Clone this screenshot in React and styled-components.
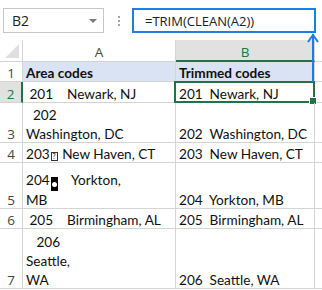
import React from "react";
import styled, { createGlobalStyle } from "styled-components";

const Global = createGlobalStyle`
  html, body { margin: 0; padding: 0; background: #fff; }
  body { width: 322px; height: 290px; overflow: hidden; }
  * { box-sizing: border-box; }
`;

const Page = styled.div`
  position: relative;
  width: 322px;
  height: 290px;
  background: #fff;
`;

const FormulaBar = styled.div`
  display: flex;
  align-items: center;
  height: 40px;
  padding: 8px 6px 7px 3px;
`;

const NameBox = styled.div`
  display: flex;
  align-items: center;
  justify-content: space-between;
  width: 101px;
  height: 25px;
  border: 1px solid #c6c6c6;
  padding: 0 6px 0 8px;
  font-family: "Open Sans", "Noto Sans", sans-serif;
  font-size: 14px;
  color: #222;
`;

const Caret = styled.span`
  width: 0;
  height: 0;
  border-left: 4px solid transparent;
  border-right: 4px solid transparent;
  border-top: 4px solid #7a7a7a;
`;

const Dots = styled.div`
  display: flex;
  flex-direction: column;
  gap: 2px;
  margin: 0 12px 0 14px;
  span {
    width: 2px;
    height: 2px;
    background: #a6a6a6;
  }
`;

const FormulaInput = styled.div`
  flex: 1;
  height: 25px;
  border: 2px solid #1a7fe0;
  display: flex;
  align-items: center;
  padding-left: 11px;
  font-family: "Open Sans", "Noto Sans", sans-serif;
  font-size: 13px;
  color: #222;
`;

const Grid = styled.div`
  display: grid;
  grid-template-columns: 23px 153px 139px 1fr;
  grid-template-rows: 22px 20px 21px 40px 20px 46px 20px 60px;
  font-family: Lato, "Liberation Sans", sans-serif;
  font-size: 13.6px;
  color: #111;
`;

const Corner = styled.div`
  position: relative;
  border-right: 1px solid #d4d4d4;
  border-bottom: 1px solid #d4d4d4;
  &::after {
    content: "";
    position: absolute;
    right: 3px;
    bottom: 3px;
    width: 0;
    height: 0;
    border-left: 14px solid transparent;
    border-bottom: 14px solid #dfdfdf;
  }
`;

const ColHead = styled.div`
  display: flex;
  align-items: center;
  justify-content: center;
  padding-top: 3px;
  font-family: "Open Sans", "Noto Sans", sans-serif;
  font-size: 13.5px;
  color: ${(p) => (p.$active ? "#217346" : "#444")};
  background: ${(p) => (p.$active ? "#e1e1e1" : "#fff")};
  border-right: 1px solid #d4d4d4;
  border-bottom: ${(p) => (p.$active ? "2px solid #217346" : "1px solid #d4d4d4")};
`;

const RowHead = styled.div`
  display: flex;
  align-items: flex-end;
  justify-content: center;
  line-height: 19px;
  font-family: "Open Sans", "Noto Sans", sans-serif;
  font-size: 13.5px;
  color: ${(p) => (p.$active ? "#217346" : "#444")};
  background: ${(p) => (p.$active ? "#e1e1e1" : "#fff")};
  border-right: ${(p) => (p.$active ? "2px solid #217346" : "1px solid #d4d4d4")};
  border-bottom: 1px solid #d4d4d4;
  span { margin-bottom: -2px; }
`;

const Cell = styled.div`
  position: relative;
  display: flex;
  align-items: flex-end;
  padding: 0 0 0 3px;
  line-height: 19px;
  white-space: pre;
  font-weight: ${(p) => (p.$bold ? 700 : 400)};
  background: ${(p) => (p.$head ? "#dae3f3" : "transparent")};
  border-right: 1px solid #d4d4d4;
  border-bottom: 1px solid #d4d4d4;
`;

const CellText = styled.span`
  margin-bottom: -2px;
`;

const Filler = styled.div`
  border-bottom: 1px solid #d4d4d4;
`;

const Selection = styled.div`
  position: absolute;
  left: -2px;
  top: -1px;
  right: -1px;
  bottom: -1px;
  border: 2px solid #217346;
  pointer-events: none;
  &::after {
    content: "";
    position: absolute;
    right: -4px;
    bottom: -4px;
    width: 6px;
    height: 6px;
    background: #217346;
    border: 1px solid #fff;
  }
`;

const MissingGlyph = styled.span`
  display: inline-block;
  width: 7px;
  height: 9px;
  margin: 0 1px;
  border: 1px solid #333;
  font-size: 7px;
  line-height: 7px;
  text-align: center;
`;

const InvertedGlyph = styled.span`
  display: inline-flex;
  align-items: center;
  justify-content: center;
  width: 7px;
  height: 14px;
  margin-left: 1px;
  background: #000;
  vertical-align: -2px;
  &::after {
    content: "";
    width: 5px;
    height: 5px;
    border-radius: 50%;
    background: #fff;
  }
`;

const Arrow = styled.svg`
  position: absolute;
  left: 306px;
  top: 33px;
`;

const rows = [
  { n: 1, a: "Area codes", b: "Trimmed codes", head: true },
  { n: 2, a: " 201    Newark, NJ", b: "201  Newark, NJ", active: true },
  { n: 3, a: "  202\nWashington, DC", b: "202  Washington, DC" },
  { n: 4, a: ["203", "missing", " New Haven, CT"], b: "203  New Haven, CT" },
  { n: 5, a: ["204", "inverted", "    Yorkton,\nMB"], b: "204  Yorkton, MB" },
  { n: 6, a: " 205    Birmingham, AL", b: "205  Birmingham, AL" },
  { n: 7, a: "   206\nSeattle,\nWA", b: "206  Seattle, WA" },
];

function renderA(a) {
  if (typeof a === "string") return a;
  return a.map((part, i) =>
    part === "missing" ? (
      <MissingGlyph key={i}>?</MissingGlyph>
    ) : part === "inverted" ? (
      <InvertedGlyph key={i} />
    ) : (
      <React.Fragment key={i}>{part}</React.Fragment>
    )
  );
}

export default function App() {
  return (
    <Page>
      <Global />
      <FormulaBar>
        <NameBox>
          <span>B2</span>
          <Caret />
        </NameBox>
        <Dots>
          <span />
          <span />
          <span />
        </Dots>
        <FormulaInput>=TRIM(CLEAN(A2))</FormulaInput>
      </FormulaBar>
      <Grid>
        <Corner />
        <ColHead>A</ColHead>
        <ColHead $active>B</ColHead>
        <Filler />
        {rows.map((r) => (
          <React.Fragment key={r.n}>
            <RowHead $active={r.active}>
              <span>{r.n}</span>
            </RowHead>
            <Cell $bold={r.head} $head={r.head}>
              <CellText>{renderA(r.a)}</CellText>
            </Cell>
            <Cell $bold={r.head} $head={r.head}>
              <CellText>{r.b}</CellText>
              {r.active && <Selection />}
            </Cell>
            <Filler />
          </React.Fragment>
        ))}
      </Grid>
      <Arrow width="14" height="50" viewBox="0 0 14 50">
        <path d="M7 1 L7 49" stroke="#1a7fe0" strokeWidth="2" fill="none" />
        <path d="M2 9 L7 2 L12 9" stroke="#1a7fe0" strokeWidth="2" fill="none" />
      </Arrow>
    </Page>
  );
}
